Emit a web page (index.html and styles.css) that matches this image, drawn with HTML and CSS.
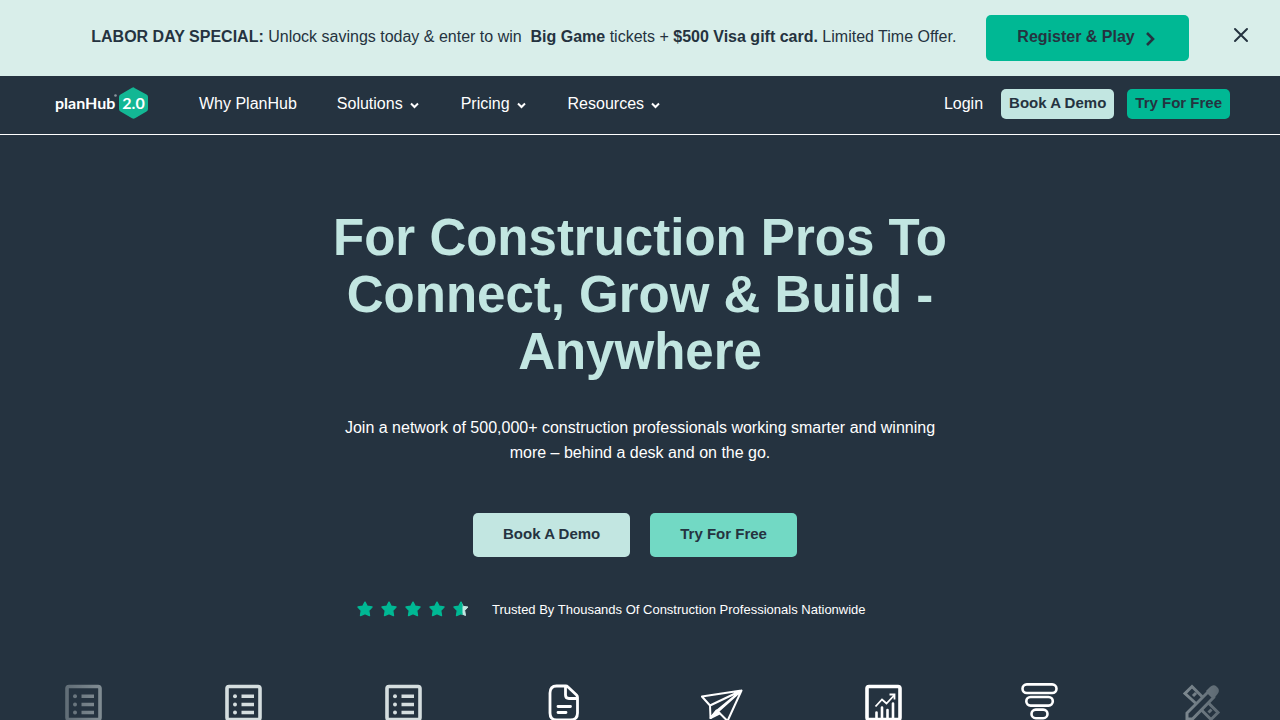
FILE: index.html
```html
<!DOCTYPE html>
<html lang="en">
<head>
    <meta charset="UTF-8">
    <meta name="viewport" content="width=device-width, initial-scale=1.0">
    <title>PlanHub</title>
    <link rel="stylesheet" href="styles.css">
</head>
<body>
    <!-- Promo Banner -->
    <div class="banner">
        <div class="banner-content">
            <p class="banner-text"><strong>LABOR DAY SPECIAL:</strong> Unlock savings today &amp; enter to win &nbsp;<strong>Big Game</strong> tickets + <strong>$500 Visa gift card.</strong> Limited Time Offer.</p>
            <a href="#" class="btn btn-register">Register &amp; Play
                <svg width="10" height="14" viewBox="0 0 10 14"><path d="M2 1 8 7 2 13" fill="none" stroke="currentColor" stroke-width="2.600"/></svg>
            </a>
        </div>
        <button type="button" class="banner-close" aria-label="Close">
            <svg width="16" height="16" viewBox="0 0 16 16"><path d="M2 2 14 14M14 2 2 14" stroke="currentColor" stroke-width="2" stroke-linecap="round"/></svg>
        </button>
    </div>

    <!-- Header -->
    <header class="header">
        <a href="#" class="logo" aria-label="planHub 2.0">
            <svg width="94" height="34" viewBox="0 0 94 34">
                <path d="M78.500 1.500 91.500 8.500Q93 9.300 93 11V23Q93 24.700 91.500 25.500L80 32.300Q78.500 33.200 77 32.300L65.500 25.500Q64 24.700 64 23V11Q64 9.300 65.500 8.500L77 1.700Q78.500 .800 80 1.700Z" fill="#13b794"/>
                <text x="0" y="23" class="logo-name">planHub</text>
                <circle cx="60.500" cy="9.500" r="1.300" fill="#8d969e"/>
                <text x="78.500" y="23" text-anchor="middle" class="logo-version">2.0</text>
            </svg>
        </a>
        <nav class="nav">
            <a href="#">Why PlanHub</a>
            <a href="#">Solutions <svg class="caret" width="11" height="7" viewBox="0 0 11 7"><path d="M1 1.500 4.500 5 8 1.500"/></svg></a>
            <a href="#">Pricing <svg class="caret" width="11" height="7" viewBox="0 0 11 7"><path d="M1 1.500 4.500 5 8 1.500"/></svg></a>
            <a href="#">Resources <svg class="caret" width="11" height="7" viewBox="0 0 11 7"><path d="M1 1.500 4.500 5 8 1.500"/></svg></a>
        </nav>
        <div class="header-actions">
            <a href="#" class="login">Login</a>
            <a href="#" class="btn btn-small btn-light">Book A Demo</a>
            <a href="#" class="btn btn-small btn-green">Try For Free</a>
        </div>
    </header>

    <!-- Hero -->
    <main class="hero">
        <h1>For Construction Pros To Connect, Grow &amp; Build - Anywhere</h1>
        <p class="hero-text">Join a network of 500,000+ construction professionals working smarter and winning more – behind a desk and on the go.</p>
        <div class="hero-buttons">
            <a href="#" class="btn btn-large btn-light">Book A Demo</a>
            <a href="#" class="btn btn-large btn-mint">Try For Free</a>
        </div>
        <div class="rating">
            <div class="stars" role="img" aria-label="4.5 out of 5 stars">
                <svg width="16" height="16" viewBox="0 0 16 16"><path id="star" d="M8 1.200 10.200 5.300 15 6 11.700 9.500 12.500 14.500 8 12.500 3.500 14.500 4.300 9.500 1 6 5.800 5.300Z" fill="#00b894" stroke="#00b894" stroke-width="1.400" stroke-linejoin="round"/></svg>
                <svg width="16" height="16" viewBox="0 0 16 16"><use href="#star"/></svg>
                <svg width="16" height="16" viewBox="0 0 16 16"><use href="#star"/></svg>
                <svg width="16" height="16" viewBox="0 0 16 16"><use href="#star"/></svg>
                <svg width="16" height="16" viewBox="0 0 16 16">
                    <clipPath id="half"><rect width="9.500" height="16"/></clipPath>
                    <path d="M8 1.200 10.200 5.300 15 6 11.700 9.500 12.500 14.500 8 12.500Z" fill="#c2e6e1" stroke="#c2e6e1" stroke-linejoin="round"/>
                    <use href="#star" clip-path="url(#half)"/>
                </svg>
            </div>
            <span class="rating-text">Trusted By Thousands Of Construction Professionals Nationwide</span>
        </div>
    </main>

    <!-- Feature Icons -->
    <ul class="features">
        <li>
            <svg class="muted" width="44" height="44" viewBox="0 0 44 44">
                <g id="list">
                    <rect x="6" y="4.500" width="33" height="33" rx="2" fill="none" stroke="currentColor" stroke-width="3.600"/>
                    <path d="M20.500 14.200H33M20.500 22.500H33M20.500 30.500H33" stroke="currentColor" stroke-width="3.600"/>
                    <g fill="currentColor"><circle cx="14" cy="14.200" r="2"/><circle cx="14" cy="22.500" r="2"/><circle cx="14" cy="30.500" r="2"/></g>
                </g>
            </svg>
        </li>
        <li><svg class="muted" width="44" height="44" viewBox="0 0 44 44"><use href="#list"/></svg></li>
        <li><svg class="muted" width="44" height="44" viewBox="0 0 44 44"><use href="#list"/></svg></li>
        <li>
            <svg width="44" height="44" viewBox="0 0 44 44" fill="none" stroke="currentColor" stroke-width="2.800" stroke-linecap="round" stroke-linejoin="round">
                <path d="M25 4H15.500Q9 4 9 11V31Q9 38 15.500 38H29.500Q36.500 38 36.500 31V15.500Q36.500 14 35.500 13L27 5Q26 4 24.500 4V13Q24.500 16.500 28 16.500H36"/>
                <path d="M17 24.500H29.500M17 30.500H25"/>
            </svg>
        </li>
        <li>
            <svg width="44" height="44" viewBox="0 0 44 44" fill="none" stroke="currentColor" stroke-width="2" stroke-linejoin="round">
                <path d="M40.500 8.500.900 14.500 9 23.500 40.500 8.500 26.500 39 17 29.500 40.500 8.500M9 23.500 9.500 36 15.500 29 40.500 8.500"/>
                <path d="M9.500 36 18.500 31.500 15.500 28.500Z" fill="currentColor"/>
            </svg>
        </li>
        <li>
            <svg width="44" height="44" viewBox="0 0 44 44" fill="none" stroke="currentColor">
                <rect x="6" y="4.500" width="33" height="33" rx="2" stroke-width="3.600"/>
                <path d="M15.500 37V30.500M21 37V25.500M26.500 37V28M32 37V21.500" stroke-width="2.600" stroke-linecap="round"/>
                <path d="M14.500 24.500 21 17.500 25.500 21.500 33 13.500M28.500 12.500H33.500V17.500" stroke-width="1.800"/>
            </svg>
        </li>
        <li>
            <svg width="44" height="44" viewBox="0 0 44 44" fill="none" stroke="currentColor" stroke-width="2.600">
                <rect x="1.500" y="2.400" width="34" height="8.600" rx="4.300"/>
                <rect x="5.300" y="15" width="26.500" height="8.600" rx="4.300"/>
                <rect x="10.500" y="27.600" width="16" height="8.600" rx="4.300"/>
            </svg>
        </li>
        <li>
            <svg class="muted" width="44" height="44" viewBox="0 0 44 44" fill="none" stroke="currentColor" stroke-width="3">
                <path d="M15 21.500 4 11.500 11 4.500 21.500 15M27 20.500 37 30.500 30 37.500 20.500 28M12 14 15 11M27.500 30.500 30.500 27.500"/>
                <path d="M6 37V31L27 10 32.500 15.500 11.500 37Z"/>
                <path d="M25 9 29 5Q32.500 2 35.500 4.500L37 6Q39 9 36.500 12L33 16.500Z" fill="currentColor" stroke="none"/>
            </svg>
        </li>
    </ul>
</body>
</html>
```
FILE: styles.css
```css
body {
    font-family: "Liberation Sans", Arial, sans-serif;
    font-size: 16px;
    background-color: #253340;
    color: #ffffff;
    margin: 0;
}
a {
    color: inherit;
    text-decoration: none;
}
svg { display: block; }

/* Buttons */
.btn {
    display: flex;
    align-items: center;
    justify-content: center;
    box-sizing: border-box;
    border-radius: 5px;
    color: #253340;
    font-size: 15px;
    font-weight: bold;
    white-space: nowrap;
}
.btn-light { background-color: #c2e6e1; }
.btn-green { background-color: #00b894; }
.btn-mint { background-color: #72d9c4; }
.btn-small {
    height: 30px;
    padding: 0 8px 2px;
}
.btn-large {
    height: 44px;
    padding: 0 30px 3px;
}
.btn-register {
    height: 46px;
    padding: 0 34px 2px 31px;
    gap: 10px;
    background-color: #00b894;
    font-size: 16px;
}
.btn-register svg { margin-top: 4px; }
.btn:hover { opacity: 0.9; }

/* Promo banner, the empty first column keeps the content centered */
.banner {
    display: grid;
    grid-template-columns: 1fr auto 1fr;
    align-items: center;
    min-height: 76px;
    background-color: #d9eeea;
    color: #253340;
}
.banner-content {
    grid-column: 2;
    display: flex;
    align-items: center;
    gap: 30px;
}
.banner-text {
    margin: 0;
    padding-bottom: 2px;
}
.banner-close {
    justify-self: end;
    margin: 0 31px 7px 0;
    padding: 0;
    border: none;
    background: none;
    color: #253340;
    cursor: pointer;
}

/* Header */
.header {
    display: flex;
    align-items: center;
    height: 58px;
    padding: 0 50px 0 55px;
    border-bottom: 1px solid #ffffff;
}
.header-actions, .nav {
    display: flex;
    align-items: center;
    padding-bottom: 3px;
}
.logo { padding-bottom: 4px; }
.logo-name, .logo-version {
    font-family: Lato, "Open Sans", sans-serif;
    font-size: 16px;
    font-weight: bold;
    fill: #ffffff;
}
.nav {
    gap: 40px;
    margin-left: 50px;
}
.nav a {
    display: flex;
    align-items: center;
    gap: 7px;
}
.caret {
    margin-top: 4px;
    fill: none;
    stroke: #ffffff;
    stroke-width: 2;
}
.header-actions { margin-left: auto; }
.login { margin-right: 18px; }
.btn-small + .btn-small { margin-left: 13px; }

/* Hero */
.hero {
    max-width: 640px;
    margin: 0 auto;
    padding-top: 74px;
    text-align: center;
}
h1 {
    margin: 0;
    color: #c2e6e1;
    font-size: 51px;
    line-height: 57px;
}
.hero-text {
    max-width: 600px;
    margin: 35px auto 0;
    line-height: 25px;
}
.hero-buttons {
    display: flex;
    justify-content: center;
    gap: 20px;
    margin-top: 48px;
    padding-right: 10px;
}
.rating {
    display: flex;
    align-items: center;
    gap: 23px;
    margin: 44px 0 0 37px;
}
.stars {
    display: flex;
    gap: 8px;
}
.rating-text { font-size: 13px; }

/* Feature icons fade out towards both edges */
.features {
    display: grid;
    grid-template-columns: repeat(8, 1fr);
    margin: 65px 0 0;
    padding: 0 0 40px;
    list-style: none;
    -webkit-mask-image: linear-gradient(to right, transparent, #000 15%, #000 85%, transparent);
    mask-image: linear-gradient(to right, transparent, #000 15%, #000 85%, transparent);
}
.features li {
    display: flex;
    justify-content: center;
    padding-left: 6px;
}
.features .muted { color: #d5dedf; }
```
